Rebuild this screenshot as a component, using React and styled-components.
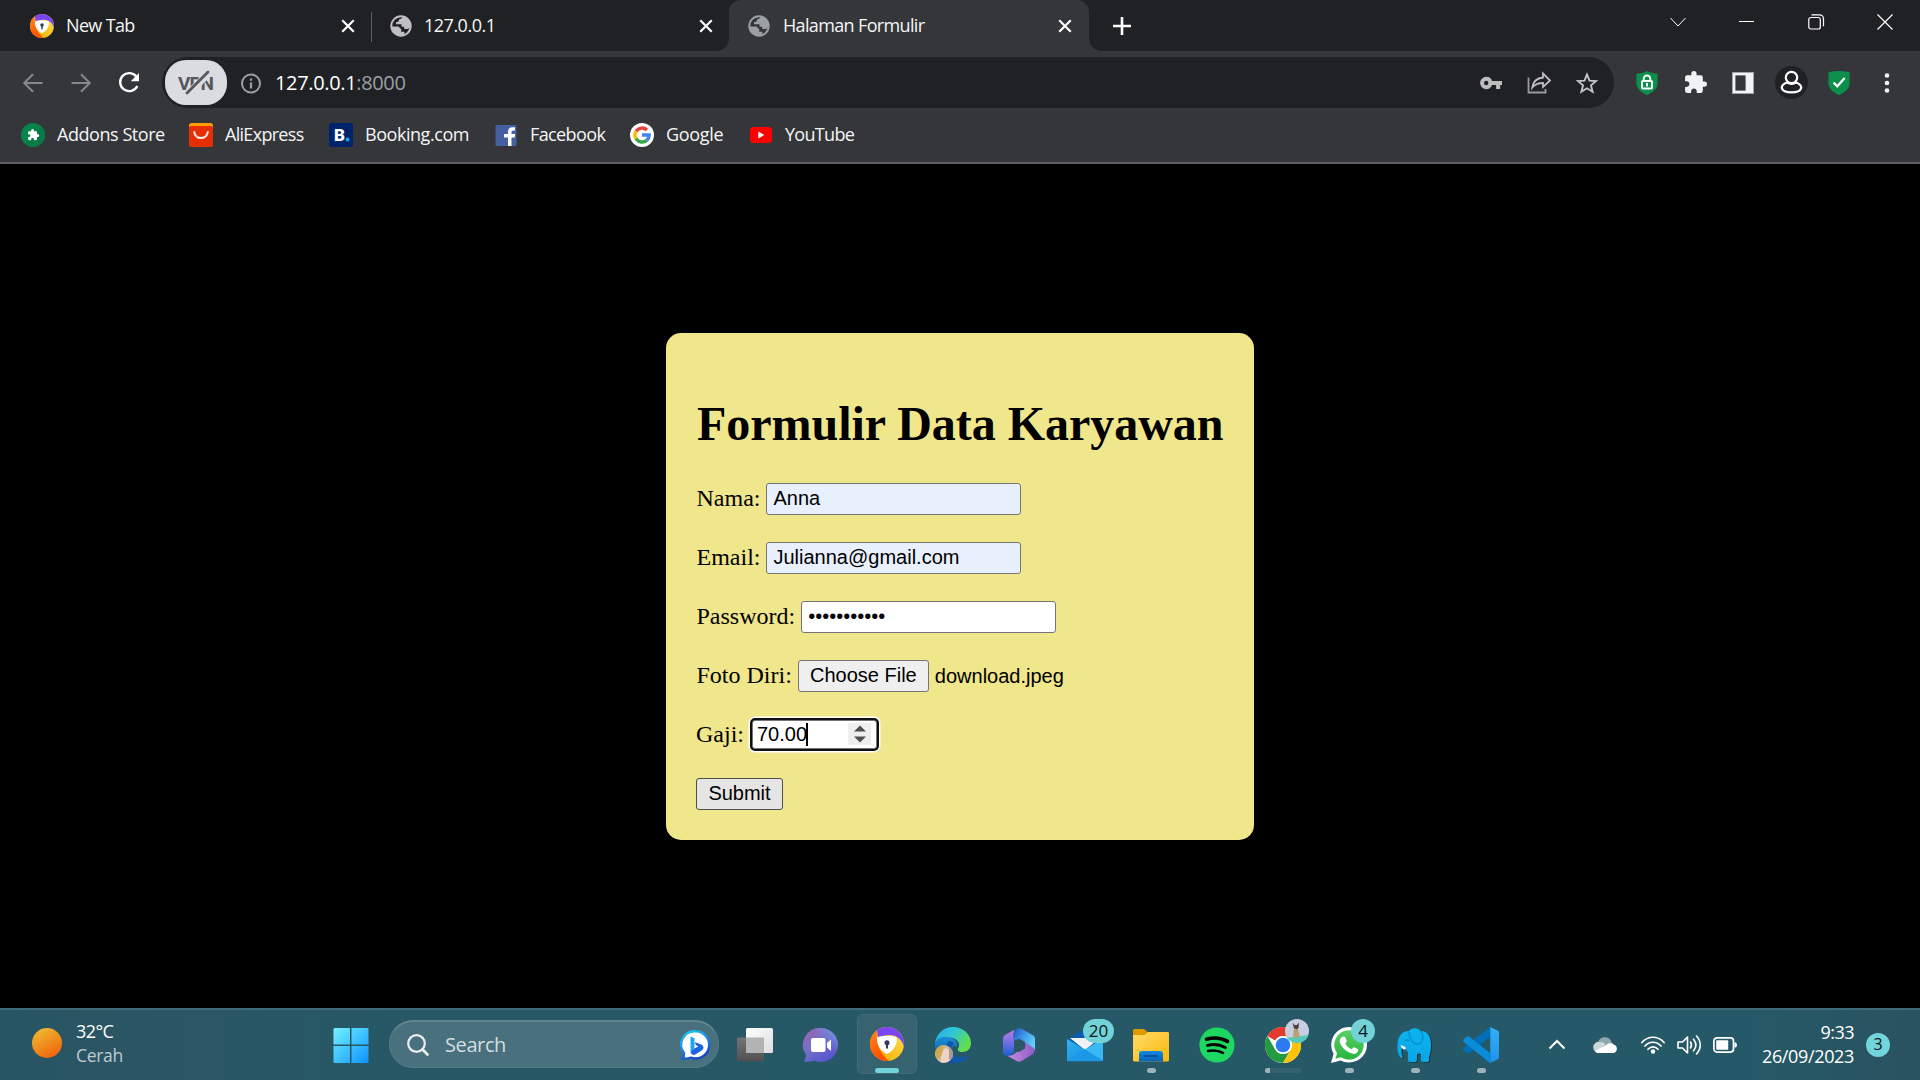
import React from "react";
import styled, { createGlobalStyle } from "styled-components";

const UI = '"Open Sans", "Noto Sans", sans-serif';

const Global = createGlobalStyle`
  *, *::before, *::after { box-sizing: border-box; }
  body { margin: 0; background: #000; overflow: hidden; }
  svg { display: block; flex: none; overflow: visible; }
`;

const Screen = styled.div`
  width: 1920px;
  height: 1080px;
  display: flex;
  flex-direction: column;
  font-family: ${UI};
  color: #fff;
`;

const Text = styled.span`
  flex: none;
  white-space: nowrap;
  font-size: ${(p) => p.$size || 18}px;
  line-height: 24px;
  letter-spacing: ${(p) => p.$ls || 0}px;
  color: ${(p) => p.$color || "#f4f5f6"};
  width: ${(p) => (p.$w ? `${p.$w}px` : "auto")};
`;

/* ---------- browser chrome ---------- */

const TabStrip = styled.div`
  height: 51px;
  background: #202124;
  display: flex;
  padding-left: 12px;
  flex: none;
`;

const Tab = styled.div`
  position: relative;
  width: ${(p) => p.$w}px;
  height: 51px;
  display: flex;
  align-items: center;
  padding: 0 ${(p) => p.$end || 17}px 0 ${(p) => p.$pad}px;
  background: ${(p) => (p.$active ? "#35363a" : "transparent")};
  border-radius: 12px 12px 0 0;
  &::before, &::after {
    content: "";
    display: ${(p) => (p.$active ? "block" : "none")};
    position: absolute;
    bottom: 0;
    width: 12px;
    height: 12px;
  }
  &::before {
    left: -12px;
    background: radial-gradient(circle at 0 0, transparent 11.5px, #35363a 12px);
  }
  &::after {
    right: -12px;
    background: radial-gradient(circle at 100% 0, transparent 11.5px, #35363a 12px);
  }
`;

const TabIcon = styled.div`
  width: ${(p) => p.$w}px;
  margin-right: ${(p) => p.$gap}px;
`;

const TabTitle = styled(Text)`
  flex: 1;
  padding-bottom: 2px;
`;

const Divider = styled.div`
  width: 1px;
  height: 30px;
  background: #5c5e62;
  margin: 12px 0 0 -1px;
`;

const NewTab = styled.div`
  width: 66px;
  display: flex;
  align-items: center;
  justify-content: center;
`;

const WindowControls = styled.div`
  margin-left: auto;
  padding-right: 1px;
  height: 43px;
  display: flex;
`;

const Control = styled.div`
  width: 69px;
  display: flex;
  align-items: center;
  justify-content: center;
`;

const Toolbar = styled.div`
  height: 63px;
  flex: none;
  background: #35363a;
  display: flex;
  align-items: center;
  padding-left: 9px;
`;

const ToolSlot = styled.div`
  width: 48px;
  height: 48px;
  flex: none;
  display: flex;
  align-items: center;
  justify-content: center;
`;

const Omnibox = styled.div`
  width: 1452px;
  height: 51px;
  margin-left: 9px;
  margin-right: 9px;
  border-radius: 26px;
  background: #202124;
  display: flex;
  align-items: center;
  padding-left: 3px;
  padding-right: 3px;
  flex: none;
`;

const VpnPill = styled.div`
  width: 62px;
  height: 45px;
  border-radius: 21px;
  background: #dadce0;
  display: flex;
  align-items: center;
  justify-content: center;
  margin-right: 13px;
`;

const Url = styled.div`
  display: flex;
  flex: 1;
  margin-left: 13px;
`;

const Bookmarks = styled.div`
  height: 50px;
  flex: none;
  background: #35363a;
  border-bottom: 2px solid #5d5e61;
  display: flex;
  align-items: flex-start;
  gap: 24px;
  padding: 9px 0 0 21px;
`;

const Bookmark = styled.div`
  display: flex;
  align-items: flex-start;
  gap: 12px;
  & > span { margin-top: -1px; }
`;

/* ---------- page ---------- */

const Page = styled.main`
  height: 844px;
  flex: none;
  background: #000;
  display: flex;
  align-items: center;
  justify-content: center;
  font-family: "Liberation Serif", serif;
  color: #000;
`;

const Card = styled.section`
  width: 588px;
  height: 507px;
  border-radius: 15px;
  background: #f0e68c;
  padding: 30px 30px 30px 31px;
`;

const Title = styled.h1`
  font-size: 48px;
  line-height: 55px;
  margin: 33px 0 31px;
  white-space: nowrap;
  letter-spacing: -0.03px;
`;

const Row = styled.div`
  display: flex;
  align-items: center;
  height: 33px;
  margin-bottom: 26px;
  font-size: 24px;
  line-height: 27px;
  gap: ${(p) => p.$gap || 6}px;
  margin-left: ${(p) => (p.$flush ? -1 : -0.5)}px;
`;

const Field = styled.div`
  width: ${(p) => p.$w || 255}px;
  height: 32px;
  margin-top: 2px;
  border: 1px solid #767676;
  border-radius: 3px;
  background: ${(p) => (p.$filled ? "#e8f0fe" : "#fff")};
  font: 20px/22px "Liberation Sans", sans-serif;
  padding: 3px 5px 3px 6px;
  display: flex;
  align-items: flex-start;
  ${(p) => p.$focus && `
    box-shadow: 0 0 0 2px #101010, 0 0 0 3.5px #fff;
    margin: 0 0 0 2px;
    height: 29px;
    padding: 2px 5px 3px 4px;
  `}
`;

const Caret = styled.span`
  width: 2px;
  height: 23px;
  margin-left: -1px;
  background: #000;
`;

const Spinner = styled.span`
  margin-left: auto;
  width: 23px;
  height: 22px;
  background: #efefef;
  display: flex;
  justify-content: center;
  align-items: center;
`;

const Button = styled.div`
  height: 32px;
  width: ${(p) => p.$w}px;
  margin-top: 2px;
  border: 1px solid ${(p) => (p.$hover ? "#4f4f4f" : "#767676")};
  border-radius: 3px;
  background: ${(p) => (p.$hover ? "#e5e5e5" : "#efefef")};
  font: 20px/28px "Liberation Sans", sans-serif;
  text-align: center;
`;

const FileName = styled.span`
  font: 20px/26px "Liberation Sans", sans-serif;
  padding-top: 2px;
`;

/* ---------- taskbar ---------- */

const Taskbar = styled.footer`
  height: 72px;
  flex: none;
  display: flex;
  align-items: stretch;
  background: linear-gradient(90deg, #285563 0, #2b5665 180px, #265866 420px, #265967 1750px, #295361 1900px);
  border-top: 2px solid #3f6a76;
`;

const Weather = styled.div`
  width: 318px;
  padding: 0 0 4px 32px;
  display: flex;
  align-items: center;
  gap: 14px;
`;

const Stack = styled.div`
  display: flex;
  flex-direction: column;
  align-items: ${(p) => (p.$end ? "flex-end" : "flex-start")};
  width: ${(p) => (p.$end ? "105px" : "auto")};
  padding-bottom: ${(p) => (p.$end ? 2 : 0)}px;
`;

const Slot = styled.div`
  position: relative;
  width: 66px;
  height: 70px;
  display: flex;
  align-items: center;
  justify-content: center;
`;

const ActiveSlot = styled(Slot)`
  width: 60px;
  height: 60px;
  margin: 4px 3px 6px;
  border-radius: 6px;
  background: #37626f;
  border: 1px solid #416b77;
`;

const Mark = styled.span`
  position: absolute;
  left: ${(p) => (p.$wide ? "17px" : "29px")};
  top: ${(p) => (p.$wide ? "53px" : "58px")};
  width: ${(p) => (p.$wide ? 24 : 9)}px;
  height: 5px;
  border-radius: 3px;
  background: ${(p) => (p.$wide ? "#73d5dc" : "#9db3b9")};
`;

const GroupMark = styled.span`
  position: absolute;
  left: 15px;
  top: 58px;
  width: 36px;
  height: 5px;
  border-radius: 3px;
  background: linear-gradient(90deg, #9db3b9 5px, #35626f 5px);
`;

const Badge = styled.span`
  position: absolute;
  left: ${(p) => p.$left}px;
  top: 9px;
  width: ${(p) => p.$w}px;
  height: 24px;
  border-radius: 12px;
  background: #73d2d8;
  color: #06161a;
  font-size: 17px;
  line-height: 24px;
  text-align: center;
`;

const AvatarBadge = styled.span`
  position: absolute;
  left: 35px;
  top: 9px;
`;

const Search = styled.div`
  width: 330px;
  height: 48px;
  margin: 10px 3px 0 5px;
  border-radius: 24px;
  background: #49707d;
  border: 1px solid #547c88;
  border-top: 2px solid #64858f;
  display: flex;
  align-items: center;
  padding: 0 7px 0 17px;
  gap: 16px;
`;

const Spacer = styled.div`
  flex: 1;
`;

const Tray = styled.div`
  display: flex;
  align-items: center;
  padding: 0 30px 1px 0;
`;

const TraySlot = styled.div`
  width: ${(p) => p.$w}px;
  display: flex;
  justify-content: center;
`;

const Notice = styled.div`
  width: 24px;
  height: 24px;
  margin-left: 12px;
  border-radius: 50%;
  background: #73d5dc;
  color: #06161a;
  font-size: 16px;
  line-height: 23px;
  text-align: center;
`;

/* ---------- icons ---------- */

const AvastIcon = ({ size = 24, id }) => (
  <svg width={size} height={size} viewBox="0 0 34 34">
    <defs>
      <linearGradient id={`${id}o`} x1="0" y1="0" x2="0.4" y2="1">
        <stop offset="0" stopColor="#ff8a1c" />
        <stop offset="1" stopColor="#ff4f00" />
      </linearGradient>
      <linearGradient id={`${id}y`} x1="0" y1="1" x2="1" y2="0">
        <stop offset="0" stopColor="#f5a800" />
        <stop offset="1" stopColor="#ffe14a" />
      </linearGradient>
      <clipPath id={`${id}c`}><circle cx="17" cy="17" r="17" /></clipPath>
    </defs>
    <g clipPath={`url(#${id}c)`}>
      <rect width="34" height="34" fill={`url(#${id}y)`} />
      <path d="M9 0C4 8 7 24 19 34H0V0z" fill={`url(#${id}o)`} />
      <path d="M7 3C12-3 27-3 34 6v14C31 8 20 5 8 11z" fill="#7b45f5" />
    </g>
    <path d="M8.500 9.800c5.500-1.300 11.500-1.300 17 0 1 .2 1.500.8 1.500 1.800 0 6.500-3.500 12.500-10 15.400C10.500 24.100 7 18.100 7 11.600c0-1 .5-1.600 1.500-1.800z" fill="#fff" />
    <circle cx="17" cy="15.700" r="2.500" fill="#34345c" />
    <path d="M16 17h2v4.500h-2z" fill="#34345c" />
  </svg>
);

const Globe = ({ color }) => (
  <svg width="22" height="22" viewBox="0 0 22 22">
    <circle cx="11" cy="11" r="9.700" fill="none" stroke={color} strokeWidth="2" />
    <path d="M1.500 11.500h7l2.700 2.700v2.600h2.500c1.200 0 1 1.800.4 3.600C9 22 2.500 19 1.500 11.500z" fill={color} />
    <path d="M12.500 1.500c-.3 2-1.800 2.300-3.200 2.800-.8 2-.8 3-3.300 3v1.900h5.500v2.500h2.700v2.300h3.300c1-.4 2.500-1 3.500-2.500C21.500 6 17 2 12.500 1.500z" fill={color} />
  </svg>
);

const CloseX = () => (
  <svg width="14" height="14" viewBox="0 0 14 14">
    <path d="M2 2l10 10M12 2L2 12" stroke="#fff" strokeWidth="2.200" strokeLinecap="square" />
  </svg>
);

const Arrow = ({ flip }) => (
  <svg width="20" height="20" viewBox="0 0 20 20" transform={flip ? "scale(-1 1)" : undefined}>
    <path d="M19.500 10H1.800M10 1.200L1.200 10l8.800 8.800" fill="none" stroke="#85878b" strokeWidth="2" />
  </svg>
);

const Reload = () => (
  <svg width="22" height="22" viewBox="0 0 22 22">
    <path d="M18.600 5A9 9 0 1 0 19.300 14" fill="none" stroke="#fff" strokeWidth="2.300" />
    <path d="M21 1v8.200h-8.200z" fill="#fff" />
  </svg>
);

const VpnStrike = () => (
  <svg width="36" height="24" viewBox="0 0 36 24">
    <text x="0" y="18.500" fontFamily="Roboto, sans-serif" fontWeight="700" fontSize="19" textLength="36" fill="#55575c">VPN</text>
    <path d="M9.500 23.500L32 1" stroke="#dadce0" strokeWidth="7" />
    <path d="M9 22L30 1" stroke="#55575c" strokeWidth="2.800" strokeLinecap="round" />
  </svg>
);

const Info = () => (
  <svg width="22" height="22" viewBox="0 0 22 22">
    <circle cx="11" cy="11.500" r="9" fill="none" stroke="#9aa0a6" strokeWidth="2" />
    <path d="M11 10.500v6M11 6.500v2.200" stroke="#9aa0a6" strokeWidth="2.200" />
  </svg>
);

const Key = () => (
  <svg width="22" height="14" viewBox="0 0 22 14">
    <path fillRule="evenodd" d="M6.200.8a6.200 6.200 0 0 1 5.900 4.100H22v4.200h-1.800v4h-4.100v-4h-4A6.200 6.200 0 1 1 6.200.8zm0 4a2.200 2.200 0 1 0 0 4.400 2.200 2.200 0 0 0 0-4.400z" fill="#bdbdbd" />
  </svg>
);

const Share = () => (
  <svg width="24" height="22" viewBox="0 0 24 22">
    <path d="M1.500 5.500v15h17v-3.500" fill="none" stroke="#999b9e" strokeWidth="1.800" />
    <path d="M16 1.500l7 7-7 6.500v-4c-5 0-8 1.200-10.700 4.500C6 10 10 6.200 16 5.500z" fill="none" stroke="#bdbdbd" strokeWidth="1.800" />
  </svg>
);

const Star = () => (
  <svg width="22" height="22" viewBox="0 0 22 22">
    <path d="M11 2.500l2.500 6.100 6.500.5-5 4.300 1.600 6.400-5.600-3.500-5.600 3.500L7 13.400 2 9.100l6.500-.5z" fill="none" stroke="#c4c4c4" strokeWidth="1.900" />
  </svg>
);

const Shield = ({ lock }) => (
  <svg width="22" height="24" viewBox="0 0 22 24">
    <path d={lock ? "M11 0c3.500 2 7 2.600 10.600 2.600V12c0 5.500-4.500 9.500-10.600 12C5 21.500.4 17.500.4 12V2.600C4 2.600 7.500 2 11 0z" : "M1.500 1C8-.2 14-.2 20.500 1c.8.200 1.100.7 1.100 1.500V12c0 5.500-4.500 9.500-10.600 12C5 21.500.4 17.500.4 12V2.500C.4 1.700.7 1.200 1.500 1z"} fill="#0b8f4b" />
    {lock ? (
      <>
        <path d="M7.700 10V7.800a3.300 3.300 0 0 1 6.600 0V10" fill="none" stroke="#fff" strokeWidth="1.900" />
        <rect x="6" y="10" width="10" height="7.500" rx=".8" fill="none" stroke="#fff" strokeWidth="1.900" />
        <path d="M11 12v3.500" stroke="#fff" strokeWidth="2" />
      </>
    ) : (
      <path d="M5.500 11.500l3.800 3.800 7.300-8.300" fill="none" stroke="#fff" strokeWidth="2.200" />
    )}
  </svg>
);

const puzzlePath = "M20.500 11H19V7c0-1.100-.9-2-2-2h-4V3.500a2.500 2.500 0 0 0-5 0V5H4c-1.100 0-1.990.9-1.990 2v3.800H3.500c1.490 0 2.700 1.210 2.700 2.700s-1.210 2.700-2.700 2.700H2V20c0 1.100.9 2 2 2h3.800v-1.500c0-1.490 1.210-2.700 2.700-2.700 1.490 0 2.700 1.210 2.700 2.700V22H17c1.100 0 2-.9 2-2v-4h1.500a2.500 2.500 0 0 0 0-5z";

const Puzzle = () => (
  <svg width="25" height="25" viewBox="0 0 24 24">
    <path d={puzzlePath} fill="#f1f3f4" />
  </svg>
);

const SidePanel = () => (
  <svg width="22" height="22" viewBox="0 0 22 22">
    <rect x="0" y="0" width="22" height="22" fill="#a3a5a8" />
    <path fillRule="evenodd" d="M1 1h20v20H1zM3.500 3.500v15h10v-15z" fill="#f1f3f4" />
    <path d="M3.500 3.500h10v15h-10z" fill="#35363a" />
  </svg>
);

const Profile = () => (
  <svg width="33" height="33" viewBox="0 0 33 33">
    <circle cx="16.500" cy="16.500" r="16.500" fill="#202124" />
    <circle cx="16.500" cy="11.500" r="5.700" fill="none" stroke="#fff" strokeWidth="2.200" />
    <path d="M12 16.500C4 19 5 26.400 16.500 26.400S29 19 21 16.500c-2.500 1.700-6.500 1.700-9 0z" fill="none" stroke="#fff" strokeWidth="2.200" />
  </svg>
);

const Dots = () => (
  <svg width="6" height="20" viewBox="0 0 6 20">
    {[2.500, 10, 17.500].map((y) => <circle key={y} cx="3" cy={y} r="2.300" fill="#f1f3f4" />)}
  </svg>
);

const AddonsIcon = () => (
  <svg width="24" height="24" viewBox="0 0 24 24">
    <circle cx="12" cy="12" r="12" fill="#08834a" />
    <path d="M20.500 3.500a12 12 0 0 1-17 17z" fill="#067a44" />
    <g transform="translate(6 5.500) scale(.53)">
      <path d={puzzlePath} fill="#fff" />
    </g>
  </svg>
);

const AliIcon = () => (
  <svg width="24" height="24" viewBox="0 0 24 24">
    <rect width="24" height="12" rx="2.500" fill="#ff9a00" />
    <path d="M0 5c0-1.500 1-2 2.500-2h19C23 3 24 3.500 24 5v16.500a2.500 2.500 0 0 1-2.500 2.500h-19A2.500 2.500 0 0 1 0 21.500z" fill="#e62e04" />
    <path d="M5.200 9c1.500 8 12.100 8 13.600 0" fill="none" stroke="#ffe9e4" strokeWidth="2" strokeLinecap="round" />
  </svg>
);

const BookingIcon = () => (
  <svg width="24" height="24" viewBox="0 0 24 24">
    <rect width="24" height="24" rx="2.500" fill="#00246b" />
    <text x="5" y="18" fontFamily="Roboto, sans-serif" fontWeight="900" fontSize="17" fill="#fff">B</text>
    <circle cx="18.500" cy="16.500" r="2" fill="#1ba3e8" />
  </svg>
);

const FacebookIcon = () => (
  <svg width="24" height="24" viewBox="0 0 24 24">
    <rect x="1.500" y="2" width="21" height="21" rx="1" fill="#4560a0" />
    <path d="M14 23v-8.500h-4V11h4V9.500C14 6 15.500 4.300 18.500 4.300H21v3.200h-1.500c-1.500 0-2 .7-2 2V11h3.700l-.5 3.500h-3.200V23z" fill="#fff" />
  </svg>
);

const GoogleIcon = () => (
  <svg width="24" height="24" viewBox="0 0 24 24">
    <circle cx="12" cy="12" r="12" fill="#fff" />
    <g fill="none" strokeWidth="3.400">
      <path d="M6.200 8.300A7 7 0 0 1 17 7" stroke="#ea4335" />
      <path d="M6.100 15.800a7.200 7.200 0 0 1 0-7.600" stroke="#fbbc05" />
      <path d="M17 17A7 7 0 0 1 6.100 15.700" stroke="#34a853" />
      <path d="M12 12h7.200c0 2-.8 3.800-2.300 5.100" stroke="#4285f4" />
    </g>
  </svg>
);

const YouTubeIcon = () => (
  <svg width="24" height="24" viewBox="0 0 24 24">
    <rect x="1" y="4" width="22" height="16" rx="3.500" fill="#f00" />
    <path d="M9.300 8.500l6 3.500-6 3.500z" fill="#fff" />
  </svg>
);

const WindowsLogo = () => (
  <svg width="36" height="36" viewBox="0 0 36 36">
    <defs>
      <linearGradient id="win" gradientUnits="userSpaceOnUse" x1="0" y1="0" x2="36" y2="36">
        <stop offset="0" stopColor="#79f3ff" />
        <stop offset=".5" stopColor="#41c3ff" />
        <stop offset="1" stopColor="#0b91ff" />
      </linearGradient>
    </defs>
    <path d="M1.500 1H17v16.500H.5V2zM18.500 1H35l.5 1v15.500h-17zM.5 19H17v17H1.500l-1-1zM18.500 19h17v16l-1 1h-16z" fill="url(#win)" />
  </svg>
);

const Magnifier = () => (
  <svg width="22" height="22" viewBox="0 0 22 22">
    <circle cx="9.500" cy="9.500" r="8.300" fill="none" stroke="#e9eef0" strokeWidth="2.200" />
    <path d="M15.500 15.500l5 5" stroke="#e9eef0" strokeWidth="2.800" strokeLinecap="round" />
  </svg>
);

const Bing = () => (
  <svg width="30" height="30" viewBox="0 0 30 30">
    <defs>
      <linearGradient id="bingRing" x1="0" y1="0" x2=".5" y2="1">
        <stop offset="0" stopColor="#1ed0ee" />
        <stop offset=".5" stopColor="#1d8eea" />
        <stop offset="1" stopColor="#1747c8" />
      </linearGradient>
    </defs>
    <path d="M15 1.300a13.600 13.600 0 1 1-5 26.400c-2 .8-5 1.100-8.500.9 1.300-1.500 1.700-3.500 1.500-5.500A13.600 13.600 0 0 1 15 1.300z" fill="#fff" stroke="url(#bingRing)" strokeWidth="2.400" />
    <path d="M9.500 6.500l4 1.700v10.500l-4 2.800z" fill="#20a5f0" />
    <path d="M9.500 21.500l4-3 4-2.300-2.500-1-1.300-3.200 6.500 2.600c3.500 2 2.500 4.800.5 6l-6.500 4c-2 1-4.500-.5-4.700-3.100z" fill="#1d62e0" />
  </svg>
);

const TaskView = () => (
  <svg width="36" height="36" viewBox="0 0 36 36">
    <defs>
      <linearGradient id="tvb" x1="0" y1="0" x2="0" y2="1"><stop offset="0" stopColor="#747474" /><stop offset="1" stopColor="#505050" /></linearGradient>
      <linearGradient id="tvf" x1="0" y1="0" x2="1" y2="1"><stop offset="0" stopColor="#fff" /><stop offset="1" stopColor="#ddd" /></linearGradient>
    </defs>
    <rect x="0" y="10.500" width="27" height="24" rx="1.500" fill="url(#tvb)" />
    <rect x="9" y="1" width="27" height="25" rx="1.500" fill="url(#tvf)" />
    <rect x="9" y="10.500" width="18" height="15.500" fill="#b3b3b3" />
  </svg>
);

const Chat = () => (
  <svg width="36" height="36" viewBox="0 0 36 36">
    <defs>
      <linearGradient id="chat" x1="0" y1="0" x2=".7" y2="1">
        <stop offset="0" stopColor="#a45fa8" />
        <stop offset=".5" stopColor="#7272c9" />
        <stop offset="1" stopColor="#5652cc" />
      </linearGradient>
      <linearGradient id="chat2" x1=".2" y1=".8" x2="1" y2="0">
        <stop offset=".5" stopColor="#6d8ee6" stopOpacity="0" />
        <stop offset="1" stopColor="#74a6f0" />
      </linearGradient>
    </defs>
    {["url(#chat)", "url(#chat2)"].map((f) => (
      <path key={f} d="M18 1a17 17 0 1 1-7 32.500c-3 1.500-6 1.500-9 1.300-.8 0-1-1-.5-1.500 1.300-2 1.500-4 1.500-5.500A17 17 0 0 1 18 1z" fill={f} />
    ))}
    <rect x="8" y="11" width="14.500" height="14" rx="2" fill="#fff" />
    <path d="M24 16l4-3.500V24l-4-3.500z" fill="#fff" />
  </svg>
);

const Edge = () => (
  <svg width="36" height="36" viewBox="0 0 36 36">
    <defs>
      <linearGradient id="edg" x1="0" y1="0" x2="1" y2=".5">
        <stop offset="0" stopColor="#2aa9e8" />
        <stop offset=".5" stopColor="#2fc6d6" />
        <stop offset="1" stopColor="#62e04b" />
      </linearGradient>
      <linearGradient id="edb" x1="0" y1="0" x2="0" y2="1"><stop offset="0" stopColor="#1b8fd8" /><stop offset="1" stopColor="#0c4b9e" /></linearGradient>
    </defs>
    <path d="M0 17C1 7 8 0 18 0c11 0 18 8 18 16 0 6-4 9-8.500 9-4 0-5.500-2-4.500-3.500 3-4 0-11-9-11-6 0-11 2-14 6.500z" fill="url(#edg)" />
    <path d="M0 18c0-7 9-9.500 15-7.500 6 1.500 8 6 7 9-3-1.500-6 0-6 4 0 6 6 9.500 12 8 3-.7 5-2.500 6.500-4.500C32 32 26 36 18 36 8 36 0 28 0 18z" fill="url(#edb)" />
    <path d="M14 14c-5 5-4 18 6 22 7 .5 12-4 14.500-8.500C28 33 17 30 16 23c-.3-3 1-5 3-6-1-2-3-3-5-3z" fill="#0f59ad" />
    <circle cx="9" cy="27" r="9" fill="#c8b79b" />
    <path d="M1 23a9 9 0 0 1 7-5c0 5-1 9-5 14-3-2-3-6-2-9z" fill="#cfa84a" />
    <path d="M8 24c1-4 5-4 6 0l1 5 1 3c-3 4-8 4.500-11 3z" fill="#f0d3c4" />
    <path d="M14 20c3 2 5 6 3.500 11L14 33z" fill="#a99c90" />
  </svg>
);

const M365 = () => (
  <svg width="36" height="36" viewBox="0 0 36 36">
    <defs>
      <linearGradient id="ma" x1="0" y1="0" x2="0" y2="1"><stop offset="0" stopColor="#c07ce0" /><stop offset=".6" stopColor="#5e6de0" /><stop offset="1" stopColor="#185fd0" /></linearGradient>
      <linearGradient id="mb" x1="0" y1="0" x2="1" y2=".6"><stop offset="0" stopColor="#1d50b4" /><stop offset=".5" stopColor="#3f96ea" /><stop offset="1" stopColor="#5dd0fb" /></linearGradient>
      <linearGradient id="mc" x1="0" y1="0" x2="1" y2="0"><stop offset="0" stopColor="#c98be6" /><stop offset="1" stopColor="#8f5cc4" /></linearGradient>
    </defs>
    <path d="M13 3L4 8c-1.500 1-2 2-2 3.500V25c0 2 1 3 3 3.500 4 1 8-1 8-5V12z" fill="url(#ma)" />
    <path d="M12 9c0-5 4-9 8-7.500l12 6.800c1.500 1 2 2 2 3.500V23l-12-8.500c-2-1.200-4-1.500-6-1-2 .5-4-1.500-4-4.500z" fill="url(#mb)" />
    <path d="M6 28.500c4 1 7-1 9-3l7-3c3-2 3-5 1-8l9 6c2 1.500 2.500 4.500 0 6.500L20.500 34c-1.700 1-3.300 1-5 0z" fill="url(#mc)" />
    <path d="M18 11.500l6 3.500v6.500L18 25l-5-3v-7.500z" fill="#2a5866" />
  </svg>
);

const Mail = () => (
  <svg width="36" height="36" viewBox="0 0 36 36">
    <defs>
      <linearGradient id="mail" x1="0" y1="0" x2="1" y2="1"><stop offset="0" stopColor="#31b3f0" /><stop offset="1" stopColor="#0f86de" /></linearGradient>
    </defs>
    <path d="M0 13L18 1l18 12-18 12z" fill="#0a5bab" />
    <path d="M3 11h30L18 23z" fill="#f2f2f2" />
    <path d="M0 12l18 10.500L36 12v21.500a.8.8 0 0 1-.8.8H.8a.8.800 0 0 1-.8-.8z" fill="url(#mail)" />
    <path d="M36 12v22L18 22.500z" fill="#43c6fa" opacity=".75" />
    <path d="M0 34L36 34 18 22.500z" fill="#1a98e6" />
  </svg>
);

const Folder = () => (
  <svg width="36" height="36" viewBox="0 0 36 36">
    <defs>
      <linearGradient id="fold" x1="0" y1="0" x2="1" y2="1"><stop offset="0" stopColor="#ffdb6a" /><stop offset="1" stopColor="#fbb80a" /></linearGradient>
      <linearGradient id="foldb" x1="0" y1="0" x2="0" y2="1"><stop offset="0" stopColor="#1589dc" /><stop offset="1" stopColor="#0663b8" /></linearGradient>
    </defs>
    <path d="M0 4c0-1.500.5-2 2-2h9l4 3.500V10H0z" fill="#e09a00" />
    <path d="M0 8h11.500l3.500-3h19.500c1 0 1.500.5 1.500 1.500V33a1.500 1.500 0 0 1-1.500 1.500h-33A1.500 1.500 0 0 1 0 33z" fill="url(#fold)" />
    <path d="M6 34.500V27c0-2 1-3 3-3h18c2 0 3 1 3 3v7.500z" fill="url(#foldb)" />
    <path d="M11.500 29h13" stroke="#0a4790" strokeWidth="1.500" strokeLinecap="round" />
  </svg>
);

const Spotify = () => (
  <svg width="36" height="36" viewBox="0 0 36 36">
    <circle cx="18" cy="18" r="17.600" fill="#1ed760" />
    <g fill="none" stroke="#000" strokeLinecap="round">
      <path d="M7.500 12.200c7-1.900 15-1.300 21 2.200" strokeWidth="3.600" />
      <path d="M8.500 18.400c6-1.600 12.500-.9 17.800 2.100" strokeWidth="3" />
      <path d="M9 24c5.300-1.200 10.500-.6 15 1.900" strokeWidth="2.500" />
    </g>
  </svg>
);

const Chrome = () => (
  <svg width="36" height="36" viewBox="0 0 36 36">
    <circle cx="18" cy="18" r="18" fill="#fff" />
    <path d="M2.410 9A18 18 0 0 1 33.590 9H18a9 9 0 0 0-7.800 4.500z" fill="#e33b2e" />
    <path d="M2.410 9A18 18 0 0 0 18 36l7.800-13.500a9 9 0 0 1-15.600 0z" fill="#249a41" />
    <path d="M33.590 9A18 18 0 0 1 18 36l7.800-13.500A9 9 0 0 0 25.800 13.500L18 9z" fill="#fdc30a" />
    <circle cx="18" cy="18" r="9" fill="#fff" />
    <circle cx="18" cy="18" r="7.300" fill="#2b7bee" />
  </svg>
);

const DogAvatar = () => (
  <svg width="24" height="24" viewBox="0 0 24 24">
    <defs><clipPath id="dog"><circle cx="12" cy="12" r="12" /></clipPath></defs>
    <g clipPath="url(#dog)">
      <rect width="24" height="24" fill="#c9cde0" />
      <path d="M0 19l24-3v8H0z" fill="#55c9b8" />
      <path d="M8.500 8c0-2 4-2 4 1l2 6v3.500H8.500c-1-4 1-6 0-10.500z" fill="#b9a078" />
      <path d="M7.500 3.500l2 2.500h2.500l2-2.500-.5 5.500-2 1.500-2.500-1.500z" fill="#4c3f3c" />
    </g>
  </svg>
);

const WhatsApp = () => (
  <svg width="36" height="36" viewBox="0 0 36 36">
    <defs><linearGradient id="wa" x1="0" y1="0" x2="0" y2="1"><stop offset="0" stopColor="#5bd066" /><stop offset="1" stopColor="#27b43e" /></linearGradient></defs>
    <path d="M18 0a17.800 17.800 0 1 1-8.400 33.400L0 36l2.600-9.300A17.800 17.800 0 0 1 18 0z" fill="#fff" />
    <path d="M18 3.200a14.700 14.700 0 1 1-7.900 27.100l-5.600 1.500L6 26.300A14.700 14.700 0 0 1 18 3.200z" fill="url(#wa)" />
    <path d="M12.500 9.500c1-.2 1.600.2 2 1.200l1.200 3c.3.700-.2 1.400-1.400 2.700 1.500 2.800 3.600 4.600 6.500 5.800 1-1.200 1.600-2.200 2.400-1.900l3.500 1.700c.8.400.6 1.500.2 2.500-.8 1.800-3.200 2.800-5.200 2.300-6.500-1.500-11-6.500-12.700-11-.8-2.300.5-6 3.500-6.300z" fill="#fff" />
  </svg>
);

const Elephant = () => (
  <svg width="36" height="36" viewBox="0 0 36 36">
    <defs><linearGradient id="ele" x1="0" y1="0" x2="0" y2="1"><stop offset="0" stopColor="#0cb4ef" /><stop offset="1" stopColor="#0aa5e6" /></linearGradient></defs>
    <path d="M12 4c2-3.500 9-4 11.500 0C31 4 34 10 34 18c0 5-1 9-2 12v3.500c0 1-1 1.500-2.500 1.500H26c-1.500 0-2-1-2-2v-6h-4v6c0 1.500-1 2-2 2h-5c-1.500 0-2-1-2-2v-8c-2-1-2.500-3-2.500-5L5 20c-.5 4-1 6 .5 9 .5 1.500-.5 2.500-1.500 2C0 27 0 20 1 14 2 8 6 4 12 4z" fill="#12313b" transform="translate(1 .8)" />
    <path d="M12 4c2-3.500 9-4 11.500 0C31 4 34 10 34 18c0 5-1 9-2 12v3.500c0 1-1 1.500-2.500 1.500H26c-1.500 0-2-1-2-2v-5c0-2-4-2-4 0v5c0 1.500-1 2-2 2h-5c-1.500 0-2-1-2-2v-8c-2-1-2.500-3-2.500-5L5 20c-.5 4-1 6 .5 9 .5 1.500-.5 2.500-1.500 2C0 27 0 20 1 14 2 8 6 4 12 4z" fill="url(#ele)" />
    <path d="M12 4.500c0 5 1 8 4.500 11 3 2.500 7 2 8.500-1.500 1.200-3 .8-7-1.500-10" fill="none" stroke="#078cc8" strokeWidth="1.200" />
    <path d="M3.500 18l5 2v2.500c-2 .5-4-1-5-4.500z" fill="#fff" />
    <path d="M8 14c1-1.500 3-1.500 4 0" fill="none" stroke="#0784bd" strokeWidth="1.200" />
  </svg>
);

const VSCode = () => (
  <svg width="36" height="36" viewBox="0 0 36 36">
    <defs><linearGradient id="vsc" x1="0" y1="0" x2="0" y2="1"><stop offset="0" stopColor="#32b1f8" /><stop offset="1" stopColor="#1c93ea" /></linearGradient></defs>
    <path d="M27 0v10L6 26.300c-.7.500-1.500.5-2.200 0L.6 23.500c-.7-.7-.7-1.700 0-2.400z" fill="#0070bb" />
    <path d="M27 36V26L6 9.500c-.7-.5-1.500-.5-2.200 0L.6 12.300c-.7.700-.7 1.700 0 2.400z" fill="#0a8cd9" />
    <path d="M27 0l8 3.700c.7.400 1 1 1 1.700v25.200c0 .7-.3 1.300-1 1.700L27 36c.3-.5.3-1 .3-1.500V1.500c0-.5 0-1-.3-1.500z" fill="url(#vsc)" />
  </svg>
);

const Cloud = () => (
  <svg width="24" height="16" viewBox="0 0 24 16">
    <path d="M5 6a7 7 0 0 1 13.500-1L20 11H5z" fill="#8ea8af" />
    <path d="M5.500 4.800c3 0 5 .7 7 2.200L4 15.500C-1.500 14-1 5.500 5.500 4.800z" fill="#cdd8db" />
    <path d="M2 14l12-6.500c1-1.500 5.500-2 7 .3 4 .7 4 8.200-1 8.200H5c-1.500 0-2.500-.7-3-2z" fill="#fff" />
  </svg>
);

const Wifi = () => (
  <svg width="24" height="18" viewBox="0 0 24 18">
    <g fill="none" stroke="#fff" strokeWidth="1.700" strokeLinecap="round">
      <path d="M.9 6.500C7-.5 17-.5 23.100 6.500" />
      <path d="M4 10c4.500-5 11.500-5 16 0" />
      <path d="M7 13.300c2.800-3.300 7.200-3.300 10 0" />
    </g>
    <circle cx="12" cy="15.500" r="2.200" fill="#fff" />
  </svg>
);

const Speaker = () => (
  <svg width="24" height="20" viewBox="0 0 24 20">
    <g fill="none" stroke="#fff" strokeWidth="1.600" strokeLinecap="round" strokeLinejoin="round">
      <path d="M1 7h4.500L10.500 2v16l-5-5H1z" />
      <path d="M13.500 7c1.300 2 1.300 4 0 6M16.500 4.200c3 3.600 3 8 0 11.600M19.500 1c5 5.500 5 12.500 0 18" />
    </g>
  </svg>
);

const Battery = () => (
  <svg width="24" height="16" viewBox="0 0 24 16">
    <rect x=".9" y=".9" width="19.600" height="14.200" rx="3" fill="none" stroke="#fff" strokeWidth="1.700" />
    <rect x="3.200" y="3.300" width="12" height="9.400" rx="1" fill="#fff" />
    <path d="M21.500 5.500h1c1.800 0 1.800 5 0 5h-1z" fill="#fff" />
  </svg>
);

const Line = ({ d, w = 24, h = 24, sw = 1.2 }) => (
  <svg width={w} height={h} viewBox={`0 0 ${w} ${h}`}>
    <path d={d} fill="none" stroke="#fff" strokeWidth={sw} />
  </svg>
);

const Sun = () => (
  <svg width="30" height="30" viewBox="0 0 30 30">
    <defs><linearGradient id="sun" x1=".2" y1="0" x2=".7" y2="1"><stop offset="0" stopColor="#f0bb30" /><stop offset="1" stopColor="#f0640c" /></linearGradient></defs>
    <circle cx="15" cy="15" r="15" fill="url(#sun)" />
  </svg>
);

/* ---------- data ---------- */

const bookmarks = [
  { icon: <AddonsIcon />, label: "Addons Store", w: 108, ls: -0.45 },
  { icon: <AliIcon />, label: "AliExpress", w: 80, ls: -0.7 },
  { icon: <BookingIcon />, label: "Booking.com", w: 105, ls: -0.45 },
  { icon: <FacebookIcon />, label: "Facebook", w: 76, ls: -0.6 },
  { icon: <GoogleIcon />, label: "Google", w: 59, ls: -0.3 },
  { icon: <YouTubeIcon />, label: "YouTube", w: 70, ls: -0.7 },
];

const extensions = [<Shield lock />, <Puzzle />, <SidePanel />, <Profile />, <Shield />, <Dots />];

export default function App() {
  return (
    <Screen>
      <Global />
      <TabStrip>
        <Tab $w={360} $pad={18}>
          <TabIcon $w={24} $gap={12}><AvastIcon id="t" /></TabIcon>
          <TabTitle $ls={-0.65}>New Tab</TabTitle>
          <CloseX />
        </Tab>
        <Divider />
        <Tab $w={357} $pad={18} $end={16}>
          <TabIcon $w={22} $gap={12}><Globe color="#bfbfbf" /></TabIcon>
          <TabTitle $ls={-0.5}>127.0.0.1</TabTitle>
          <CloseX />
        </Tab>
        <Tab $w={360} $pad={19} $active>
          <TabIcon $w={22} $gap={13}><Globe color="#9aa0a6" /></TabIcon>
          <TabTitle $ls={-0.65}>Halaman Formulir</TabTitle>
          <CloseX />
        </Tab>
        <NewTab><Line w={18} h={18} sw={2.6} d="M9 0v18M0 9h18" /></NewTab>
        <WindowControls>
          <Control><Line w={16} h={10} sw={1} d="M.5 1L8 9l7.500-8" /></Control>
          <Control><Line w={15} h={1} sw={1} d="M0 .5h15" /></Control>
          <Control><Line w={16} h={16} d="M2.800 3.500h7.500a2 2 0 0 1 2 2v7.500a2 2 0 0 1-2 2H2.800a2 2 0 0 1-2-2V5.500a2 2 0 0 1 2-2M3.500.8h8a4 4 0 0 1 4 4v7.500" /></Control>
          <Control><Line w={16} h={16} d="M.5.5l15 15M15.500.5l-15 15" /></Control>
        </WindowControls>
      </TabStrip>

      <Toolbar>
        <ToolSlot><Arrow /></ToolSlot>
        <ToolSlot><Arrow flip /></ToolSlot>
        <ToolSlot><Reload /></ToolSlot>
        <Omnibox>
          <VpnPill><VpnStrike /></VpnPill>
          <Info />
          <Url>
            <Text $size={20} $ls={-0.35} $color="#fff">127.0.0.1</Text>
            <Text $size={20} $ls={-0.35} $color="#9aa0a6">:8000</Text>
          </Url>
          <ToolSlot><Key /></ToolSlot>
          <ToolSlot><Share /></ToolSlot>
          <ToolSlot><Star /></ToolSlot>
        </Omnibox>
        {extensions.map((icon, i) => <ToolSlot key={i}>{icon}</ToolSlot>)}
      </Toolbar>

      <Bookmarks>
        {bookmarks.map((b) => (
          <Bookmark key={b.label}>
            {b.icon}
            <Text $w={b.w} $ls={b.ls}>{b.label}</Text>
          </Bookmark>
        ))}
      </Bookmarks>

      <Page>
        <Card>
          <Title>Formulir Data Karyawan</Title>
          <Row>Nama: <Field $filled>Anna</Field></Row>
          <Row>Email: <Field $filled>Julianna@gmail.com</Field></Row>
          <Row>Password: <Field>•••••••••••</Field></Row>
          <Row>Foto Diri: <Button $w={131}>Choose File</Button><FileName>download.jpeg</FileName></Row>
          <Row $flush>
            Gaji:
            <Field $focus $w={125}>
              70.00<Caret />
              <Spinner>
                <svg width="12" height="18" viewBox="0 0 12 18">
                  <path d="M0 6.500L6 .5l6 6zM0 11.500l6 6 6-6z" fill="#505050" />
                </svg>
              </Spinner>
            </Field>
          </Row>
          <Row $flush><Button $w={87} $hover>Submit</Button></Row>
        </Card>
      </Page>

      <Taskbar>
        <Weather>
          <Sun />
          <Stack>
            <Text $size={18} $ls={-0.6} $color="#fff">32°C</Text>
            <Text $size={17.5} $ls={-0.3} $color="#bfccd0">Cerah</Text>
          </Stack>
        </Weather>
        <Slot><WindowsLogo /></Slot>
        <Search>
          <Magnifier />
          <Text $size={20} $ls={-0.4} $color="#d3dde0">Search</Text>
          <Spacer />
          <Bing />
        </Search>
        <Slot><TaskView /></Slot>
        <Slot><Chat /></Slot>
        <ActiveSlot><AvastIcon size={34} id="b" /><Mark $wide /></ActiveSlot>
        <Slot><Edge /></Slot>
        <Slot><M365 /></Slot>
        <Slot><Mail /><Badge $left={31} $w={31}>20</Badge></Slot>
        <Slot><Folder /><Mark /></Slot>
        <Slot><Spotify /></Slot>
        <Slot><Chrome /><AvatarBadge><DogAvatar /></AvatarBadge><GroupMark /></Slot>
        <Slot><WhatsApp /><Badge $left={35} $w={24}>4</Badge><Mark /></Slot>
        <Slot><Elephant /><Mark /></Slot>
        <Slot><VSCode /><Mark /></Slot>
        <Spacer />
        <Tray>
          <TraySlot $w={48}><Line w={16} h={9} sw={2} d="M.5 8.500L8 1l7.500 7.500" /></TraySlot>
          <TraySlot $w={48}><Cloud /></TraySlot>
          <TraySlot $w={48}><Wifi /></TraySlot>
          <TraySlot $w={24}><Speaker /></TraySlot>
          <TraySlot $w={48}><Battery /></TraySlot>
          <Stack $end>
            <Text $size={18} $ls={-0.5} $color="#fff">9:33</Text>
            <Text $size={18} $ls={-0.35} $color="#fff">26/09/2023</Text>
          </Stack>
          <Notice>3</Notice>
        </Tray>
      </Taskbar>
    </Screen>
  );
}
